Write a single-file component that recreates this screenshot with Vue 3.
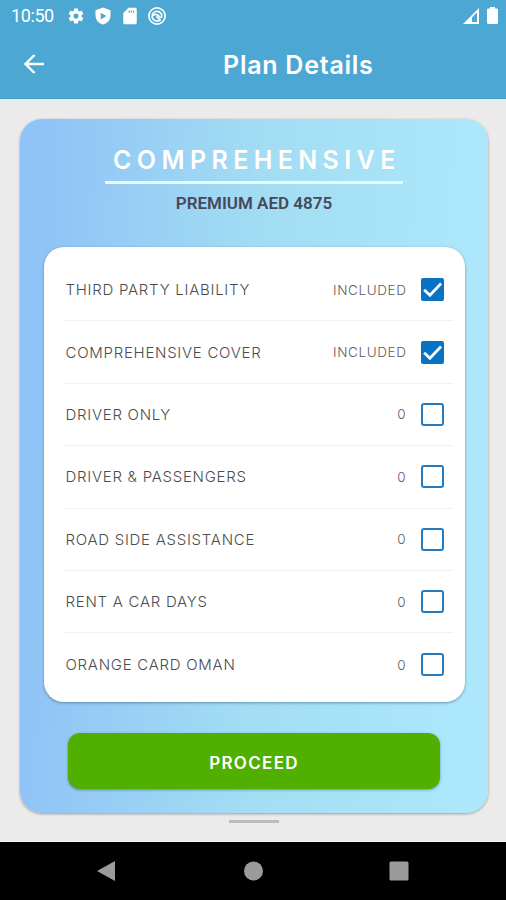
<template>
  <div class="screen">
    <!-- Status bar and title -->
    <header class="app-header">
      <div class="status-bar">
        <span class="clock">10:50</span>
        <svg class="status-icon" viewBox="0 0 24 24">
          <path d="M19.43 12.98c.04-.32.07-.64.07-.98s-.03-.66-.07-.98l2.11-1.65c.19-.15.24-.42.12-.64l-2-3.46c-.12-.22-.39-.3-.61-.22l-2.49 1c-.52-.4-1.08-.73-1.69-.98l-.38-2.65C14.46 2.18 14.25 2 14 2h-4c-.25 0-.46.18-.49.42l-.38 2.65c-.61.25-1.17.59-1.69.98l-2.49-1c-.23-.09-.49 0-.61.22l-2 3.46c-.13.22-.07.49.12.64l2.11 1.65c-.04.32-.07.65-.07.98s.03.66.07.98l-2.11 1.65c-.19.15-.24.42-.12.64l2 3.46c.12.22.39.3.61.22l2.49-1c.52.4 1.08.73 1.69.98l.38 2.65c.03.24.24.42.49.42h4c.25 0 .46-.18.49-.42l.38-2.65c.61-.25 1.17-.59 1.69-.98l2.49 1c.23.09.49 0 .61-.22l2-3.46c.12-.22.07-.49-.12-.64l-2.11-1.65zM12 15.5c-1.93 0-3.500-1.57-3.500-3.500s1.57-3.500 3.500-3.500 3.500 1.57 3.500 3.500-1.57 3.500-3.500 3.500z" />
        </svg>
        <svg class="status-icon" viewBox="0 0 24 24">
          <path fill-rule="evenodd" d="M12 .5L2 4.300v7C2 17 6.200 21.800 12 23.200c5.800-1.400 10-6.200 10-11.900v-7zM9 7.500l7.500 4.500L9 16.500z" />
        </svg>
        <svg class="status-icon" viewBox="0 0 24 24">
          <path fill-rule="evenodd" d="M19 1h-9L3 8v13c0 1.100.9 2 2 2h14c1.100 0 2-.9 2-2V3c0-1.100-.9-2-2-2zM10 4.500h1.500v3H10zM13 4.500h1.500v3H13zM16 4.500h1.500v3H16z" />
        </svg>
        <svg class="status-icon" viewBox="0 0 24 24">
          <g fill="none" stroke="#fff" stroke-width="2.2">
            <circle cx="12" cy="12" r="10.800" />
            <path d="M16.500 17A6.500 6.500 0 1 1 18.500 12c0 1.800-1.500 2.500-2.500 1.500C13 10.500 10 8 7 11.500M11 12.500l6 5.500" />
          </g>
        </svg>
        <svg class="signal-icon" viewBox="0 0 16 16">
          <path fill-rule="evenodd" d="M0 16L16 0v16zM9 9.500V14h5V4.300z" />
        </svg>
        <svg class="battery-icon" viewBox="0 0 11 17">
          <path d="M3 1.500V0h5v1.500h1.800c.7 0 1.200.5 1.200 1.200v13.100c0 .7-.5 1.200-1.200 1.200H1.200C.5 17 0 16.500 0 15.800V2.700c0-.7.5-1.200 1.200-1.200z" />
        </svg>
      </div>
      <div class="title-bar">
        <button class="back-btn" aria-label="Back">
          <svg viewBox="0 0 20 20">
            <path d="M20 10H2M10.500 1L1.500 10l9 9" />
          </svg>
        </button>
        <h1 class="page-title">Plan Details</h1>
      </div>
    </header>

    <main class="content">
      <section class="plan-card">
        <h2 class="plan-name">COMPREHENSIVE</h2>
        <p class="premium">PREMIUM AED 4875</p>

        <!-- Covers of the plan -->
        <div class="cover-list">
          <div
            v-for="(cover, index) in covers"
            :key="index"
            class="cover-row"
            @click="toggleCover(cover)"
          >
            <span class="cover-name">{{ cover.name }}</span>
            <span class="cover-value" :class="{ 'is-included': cover.value === 'INCLUDED' }">{{ cover.value }}</span>
            <span class="checkbox" :class="{ 'is-checked': cover.checked }">
              <svg v-if="cover.checked" viewBox="0 0 22 22">
                <path d="M3 11.200l5.500 5.300L19.200 5.300" />
              </svg>
            </span>
          </div>
        </div>

        <button class="proceed-btn">PROCEED</button>
      </section>
      <div class="page-indicator"></div>
    </main>

    <!-- System navigation -->
    <nav class="nav-bar">
      <svg viewBox="0 0 20 22"><path d="M18 1v20L0 11z" /></svg>
      <svg viewBox="0 0 20 22"><circle cx="10.500" cy="11" r="9.500" /></svg>
      <svg viewBox="0 0 20 22"><rect x="0.500" y="1.500" width="19" height="19" rx="1.500" /></svg>
    </nav>
  </div>
</template>

<script setup>
import { ref } from 'vue'

const covers = ref([
  { name: 'THIRD PARTY LIABILITY', value: 'INCLUDED', checked: true },
  { name: 'COMPREHENSIVE COVER', value: 'INCLUDED', checked: true },
  { name: 'DRIVER ONLY', value: '0', checked: false },
  { name: 'DRIVER & PASSENGERS', value: '0', checked: false },
  { name: 'ROAD SIDE ASSISTANCE', value: '0', checked: false },
  { name: 'RENT A CAR DAYS', value: '0', checked: false },
  { name: 'ORANGE CARD OMAN', value: '0', checked: false }
])

// Included covers belong to the plan and can't be switched off
const toggleCover = (cover) => {
  if (cover.value !== 'INCLUDED') {
    cover.checked = !cover.checked
  }
}
</script>

<style>
body {
  margin: 0;
}
</style>

<style scoped>
.screen {
  display: flex;
  flex-direction: column;
  height: 900px;
  background-color: #ebebeb;
  font-family: Inter, sans-serif;
  box-sizing: border-box;
  overflow: hidden;
}

/* Header */
.app-header {
  height: 99px;
  flex-shrink: 0;
  background-color: #4da7d3;
  border-bottom: 1px solid #3a9dc6;
  box-sizing: border-box;
  color: #ffffff;
}

.status-bar {
  display: flex;
  align-items: center;
  height: 31px;
  padding: 0 8px 0 11px;
  fill: #ffffff;
}

.clock {
  width: 56px;
  font-family: Roboto, sans-serif;
  font-size: 18px;
  line-height: 31px;
  letter-spacing: -0.4px;
}

.status-icon {
  width: 18px;
  height: 18px;
  margin-right: 9px;
}

.signal-icon {
  width: 16px;
  height: 16px;
  margin-left: auto;
}

.battery-icon {
  width: 11px;
  height: 17px;
  margin-left: 8px;
}

.title-bar {
  display: flex;
  align-items: center;
  height: 67px;
  padding-left: 24px;
}

.back-btn {
  width: 20px;
  height: 20px;
  margin-top: -1px;
  padding: 0;
  border: none;
  background: none;
}

.back-btn svg {
  display: block;
  fill: none;
  stroke: #ffffff;
  stroke-width: 2.3;
}

.page-title {
  margin: 1px 0 0 179px;
  font-size: 25px;
  font-weight: 600;
  line-height: 30px;
  letter-spacing: 0.75px;
}

/* Plan card */
.content {
  flex: 1;
  display: flex;
  flex-direction: column;
  align-items: center;
  padding: 20px 18px 0 20px;
  border-bottom: 1px solid #f6f6f6;
}

.plan-card {
  display: flex;
  flex-direction: column;
  align-items: center;
  width: 468px;
  height: 694px;
  padding: 22px 24px 0;
  box-sizing: border-box;
  border-radius: 22px;
  background: linear-gradient(92deg, #90c3f6 5%, #a2ddf3 50%, #ade7fb 95%);
  box-shadow: 0 1px 3px rgba(0, 0, 0, 0.35);
}

.plan-name {
  width: 298px;
  height: 43px;
  margin: 0;
  padding-left: 8px;
  box-sizing: border-box;
  border-bottom: 3px solid #ecfaff;
  color: #ffffff;
  font-size: 25px;
  font-weight: 600;
  line-height: 38px;
  letter-spacing: 5.4px;
  white-space: nowrap;
}

.premium {
  margin: 7px 0 0;
  color: #484858;
  font-family: Roboto, sans-serif;
  font-size: 17px;
  font-weight: 600;
  line-height: 24px;
}

.cover-list {
  width: 421px;
  height: 455px;
  margin-top: 32px;
  padding: 12px 12px 0 20px;
  box-sizing: border-box;
  border-radius: 20px;
  background-color: #ffffff;
  box-shadow: 0 1px 3px rgba(0, 40, 60, 0.4);
}

.cover-row {
  display: flex;
  align-items: center;
  height: 62.4px;
  padding: 0 9px 0 2px;
  box-sizing: border-box;
  border-bottom: 1px solid #f2f2f2;
  color: #4c4c4c;
  cursor: pointer;
}

.cover-row:last-child {
  border-bottom: none;
}

.cover-name {
  flex: 1;
  font-size: 15px;
  font-weight: 300;
  letter-spacing: 0.73px;
}

.cover-value {
  margin-right: 15px;
  color: #606060;
  font-size: 13.5px;
  font-weight: 300;
}

.cover-value.is-included {
  margin-right: 14px;
  letter-spacing: 0.6px;
}

.checkbox {
  width: 23px;
  height: 23px;
  box-sizing: border-box;
  border: 2px solid #247bc0;
  border-radius: 3px;
}

.checkbox.is-checked {
  border: none;
  border-radius: 2px;
  background-color: #0873c4;
}

.checkbox svg {
  display: block;
  fill: none;
  stroke: #ffffff;
  stroke-width: 2.6;
}

.proceed-btn {
  width: 372px;
  height: 56px;
  margin-top: 31px;
  padding: 3px 0 0;
  border: none;
  border-radius: 12px;
  background-color: #51af00;
  box-shadow: 0 1px 3px rgba(0, 40, 60, 0.4);
  color: #ffffff;
  font-family: inherit;
  font-size: 17px;
  font-weight: 600;
  letter-spacing: 1.3px;
}

.page-indicator {
  width: 50px;
  height: 3px;
  margin-top: 7px;
  background-color: #bcbcbc;
}

/* System navigation */
.nav-bar {
  display: flex;
  justify-content: space-between;
  height: 58px;
  padding: 18px 97px 0;
  box-sizing: border-box;
  background-color: #000000;
}

.nav-bar svg {
  width: 20px;
  height: 22px;
  fill: #9b9b9b;
}
</style>
